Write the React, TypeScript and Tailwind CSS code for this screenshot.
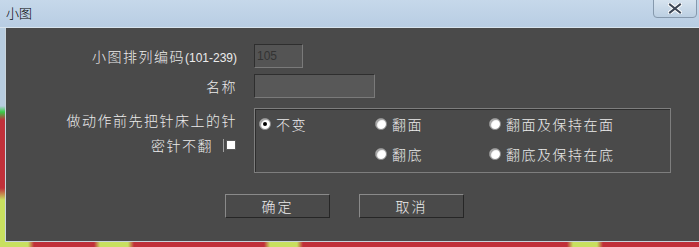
import React from 'react';

const cjk = "font-['Noto_Sans_CJK_SC','Noto_Sans',sans-serif] font-light";

function Radio({ label, checked = false }: { label: string; checked?: boolean }) {
  return (
    <div className="flex items-center gap-[5px]">
      <span className="w-[12px] h-[12px] rounded-full bg-white border border-[#8a8a8a] flex items-center justify-center shadow-[inset_1px_1px_1px_#9a9a9a]">
        {checked && <span className="w-[4px] h-[4px] rounded-full bg-black" />}
      </span>
      <span className="text-[14px] leading-none tracking-[1.5px] text-[#ececec]">{label}</span>
    </div>
  );
}

function Button({ label }: { label: string }) {
  return (
    <button className="w-[105px] h-[24px] bg-[#4a4a4a] border border-t-[#8a8a8a] border-l-[#8a8a8a] border-r-[#262626] border-b-[#262626] text-[14px] tracking-[2px] text-[#ececec] flex items-center justify-center">
      {label}
    </button>
  );
}

export default function App() {
  return (
    <div className={`w-[699px] h-[247px] flex flex-col overflow-hidden ${cjk}`}>
      {/* title bar */}
      <div className="h-[28px] flex items-start justify-between bg-[linear-gradient(to_bottom,#c6d8ea,#b8cde3)] border-b border-[#d8e4ee]">
        <span className="ml-[6px] mt-[6px] text-[13px] leading-none text-black">小图</span>
        <div className="mr-[2px] -mt-px w-[44px] h-[19px] rounded-b-[4px] border border-[#8699ad] bg-[linear-gradient(to_bottom,#d6e3ef,#bccfe2)] flex items-center justify-center">
          <svg width="14" height="11" viewBox="0 0 14 11">
            <path d="M2 1.5 L12 9.5 M12 1.5 L2 9.5" stroke="#ffffff" strokeWidth="4" strokeLinecap="square" />
            <path d="M2 1.5 L12 9.5 M12 1.5 L2 9.5" stroke="#3c4656" strokeWidth="2" strokeLinecap="square" />
          </svg>
        </div>
      </div>

      <div className="flex h-[214px]">
        <div className="w-[5px] bg-[linear-gradient(to_bottom,#b8cde0_0px,#b8cde0_78px,#38cc48_84px,#c0303a_92px,#c0303a_160px,#c8e060_172px)]" />
        {/* dialog body */}
        <div className="flex-1 bg-[#4a4a4a] border-l border-b border-[#c8d4dc] pt-[16px] flex flex-col">
          <div className="flex items-center h-[24px]">
            <div className="w-[231px] text-right text-[14px] tracking-[1.5px] text-[#ececec] leading-none">
              小图排列编码<span className="font-['Liberation_Sans',sans-serif] font-normal text-[12px] tracking-normal">(101-239)</span>
            </div>
            <div className="ml-[17px] w-[49px] h-[24px] bg-[#545454] border border-t-[#2e2e2e] border-l-[#2e2e2e] border-r-[#7a7a7a] border-b-[#7a7a7a] flex items-center pl-[2px] font-['Liberation_Sans',sans-serif] font-normal text-[12px] text-[#333]">
              105
            </div>
          </div>

          <div className="flex items-center h-[24px] mt-[6px]">
            <div className="w-[231px] text-right text-[14px] tracking-[1.5px] text-[#ececec] leading-none">名称</div>
            <div className="ml-[17px] w-[121px] h-[24px] bg-[#585858] border border-t-[#2e2e2e] border-l-[#2e2e2e] border-r-[#7a7a7a] border-b-[#7a7a7a]" />
          </div>

          <div className="flex mt-[10px]">
            <div className="w-[231px] flex flex-col items-end pt-[5px] text-[14px] tracking-[1.5px] text-[#ececec] leading-none">
              <span>做动作前先把针床上的针</span>
              <div className="flex items-center mt-[11px] mr-[1px]">
                <span>密针不翻</span>
                <span className="ml-[10px] w-[13px] h-[13px] border-l border-[#a0a0a0] flex items-center justify-end">
                  <span className="w-[10px] h-[10px] bg-white border border-[#5a5a5a]" />
                </span>
              </div>
            </div>
            <div className="ml-[17px] w-[417px] h-[65px] border border-[#7e7e7e] shadow-[inset_1px_1px_0_#2e2e2e] grid grid-cols-[116px_114px_1fr] grid-rows-[29px_32px] items-center pl-[4px]">
              <Radio label="不变" checked />
              <Radio label="翻面" />
              <Radio label="翻面及保持在面" />
              <div />
              <Radio label="翻底" />
              <Radio label="翻底及保持在底" />
            </div>
          </div>

          <div className="flex mt-[21px] ml-[219px] gap-[29px]">
            <Button label="确定" />
            <Button label="取消" />
          </div>
        </div>
      </div>

      <div className="h-[5px] bg-[linear-gradient(to_right,#c8e060_0px,#c8e060_28px,#c0303a_34px,#c0303a_94px,#c8e060_100px,#c8e060_128px,#c0303a_134px,#c0303a_264px,#c8e060_270px,#c8e060_297px,#c0303a_303px,#c0303a_567px,#c8e060_573px,#c8e060_597px,#c0303a_603px)]" />
    </div>
  );
}
